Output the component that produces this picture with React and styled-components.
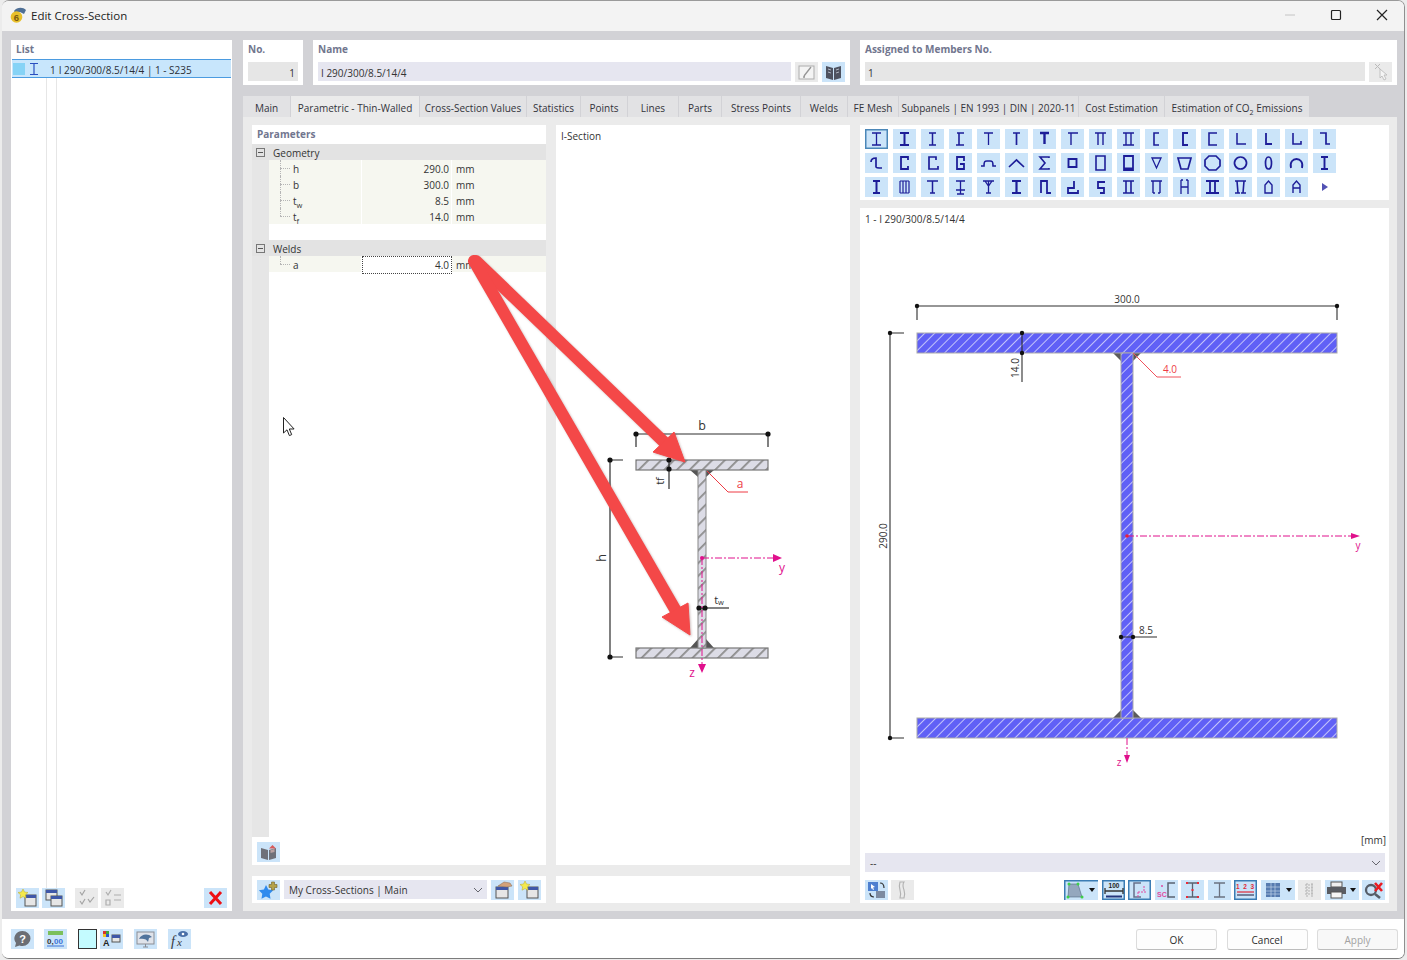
import React from "react";
import styled, { createGlobalStyle } from "styled-components";

const FONT = `"Open Sans", "Noto Sans", Arial, sans-serif`;
const NAVY = "#1d1d98";

const Global = createGlobalStyle`
  html, body {
    margin: 0;
    padding: 0;
    height: 960px;
    overflow: hidden;
    background: #ececec;
    font-family: ${FONT};
    font-size: 10px;
    color: #333;
  }
  * { box-sizing: border-box; }
`;

// cross-section picker glyphs, row by row
const SHAPES = [
  ["M7 4H16M11.5 4V16M7 16H16", 1.3, true],
  ["M7 4H16M7 16H16M11.5 4V16", 2],
  ["M8 4H15M11.5 4V16M8 16H15", 1.5],
  ["M8 4H15M10 4V16M7 16H15", 1.6],
  ["M7 4H16M11.5 4V16", 1.3],
  ["M8 4H15M11.5 4V16", 1.7],
  ["M7 4H16M11.5 4V15", 2.4],
  ["M7 4H17M10 4V16", 1.4],
  ["M6 4H17M9 4V16M14 4V16", 1.4],
  ["M6 4H17M9 4V16M14 4V16M6 16H17", 1.4],
  ["M14 4H9V16H14", 1.6],
  ["M15 4H10V16H15", 1.9],
  ["M16 4H8V16H16", 1.6],
  ["M8 4V15H17", 1.5],
  ["M9 4V15H15", 1.8],
  ["M8 4V15H16V12", 1.6],
  ["M7 4H13V15H17", 1.7],

  ["M6 9C6 5 10 5 11 5V14C11 15 14 15 17 15", 1.7],
  ["M15 7V4H8V16H15V13", 1.8],
  ["M15 7V4H8V16H17V13", 1.7],
  ["M15 8V4H8V16H15V11H11", 1.8],
  ["M4 13H7C7 8 8 8 10 8H13C15 8 16 8 16 13H19", 1.6],
  ["M4 14L11.5 7L19 14", 1.7],
  ["M16 5V4H7L12 10L7 16H16V15", 1.6],
  ["M7.5 6H15.5V14H7.5Z", 1.9],
  ["M7 3H16V17H7Z", 1.6],
  ["M7 3H16V17H7ZM7 15.5H16", 1.8],
  ["M7 5H16L11.5 15Z", 1.3],
  ["M5 5H18L15 16H8Z", 1.7],
  ["M8 3H15L19 7V13L15 17H8L4 13V7Z", 1.7],
  ["M11.5 4a6 6 0 1 0 .01 0Z", 1.7],
  ["M11.5 4c-4 0-4 12 0 12s4-12 0-12Z", 1.7],
  ["M6 15C3 3 20 3 17 15", 1.8],
  ["M8 4H15M11.5 4V16M8 16H15", 1.9],

  ["M8 4H15M11.5 4V16M8 16H15", 2],
  ["M7 4H16M7 16H16M7 4V16M16 4V16M10 4V16M13 4V16", 1.2],
  ["M6 4H17M11.5 4V16M9 16H14", 1.5],
  ["M7 4H16M11.5 4V17M7 13H16M8 17H15", 1.3],
  ["M6 4H17M8 4L11.5 9L15 4M11.5 4V16M9 16H14", 1.3],
  ["M7 4H16M11.5 4V16M7 16H16", 2.2],
  ["M8 16V4H14V16H18", 1.8],
  ["M13 4V11H7V16H17V13", 1.8],
  ["M16 5H9V11H15V16H11", 1.8],
  ["M6 4H17M9 4V16M14 4V16M6 16H17", 1.6],
  ["M6 4H17M8 4V16M15 4V16M8 16H10M13 16H15", 1.4],
  ["M8 3V17M15 3V17M8 10H15M8 3H10M13 3H15", 1.3],
  ["M5 4H18M9 4V16M14 4V16M5 16H18", 1.8],
  ["M6 4H17M8 4L9 16M15 4L14 16M6 16H11M12 16H17", 1.6],
  ["M8 16V8L11.5 4L15 8V16Z", 1.4],
  ["M8 16V8L11.5 4L15 8V16M8 11H15", 1.4],
];

const TABS = [
  ["Main", 48],
  ["Parametric - Thin-Walled", 129, true],
  ["Cross-Section Values", 107],
  ["Statistics", 54],
  ["Points", 47],
  ["Lines", 51],
  ["Parts", 43],
  ["Stress Points", 79],
  ["Welds", 47],
  ["FE Mesh", 51],
  ["Subpanels | EN 1993 | DIN | 2020-11", 180],
  ["Cost Estimation", 86],
  [
    <>
      Estimation of CO<sub>2</sub> Emissions
    </>,
    145,
  ],
];

const GEOMETRY = [
  ["h", "290.0"],
  ["b", "300.0"],
  [
    <>
      t<sub>w</sub>
    </>,
    "8.5",
  ],
  [
    <>
      t<sub>f</sub>
    </>,
    "14.0",
  ],
];

// small toolbar drawings
const Win = ({ x = 8, y = 6, w = 11, h = 11 }) => (
  <>
    <rect x={x} y={y} width={w} height={h} fill="#e6e6e6" stroke="#555" />
    <rect x={x} y={y} width={w} height="3" fill="#3f57a8" />
  </>
);
const Spark = () => <path d="M7 1l1.500 3 3.500.5-2.500 2.300.6 3.400L7 8.600l-3 1.600.6-3.400L2 4.500 5.500 4z" fill="#f4e94c" stroke="#b9a92a" strokeWidth=".5" />;

const ICONS = {
  add: (
    <>
      <Win x={9} y={7} w={11} h={11} />
      <Spark />
    </>
  ),
  copy: (
    <>
      <Win x={4} y={2} w={11} h={10} />
      <Win x={9} y={8} w={11} h={10} />
    </>
  ),
  checks: <path d="M5 4l2 3 3-5M5 13l2 3 3-5M13 11l2 3 4-5" fill="none" stroke="#9a9a9a" strokeWidth="1.200" />,
  checks2: <path d="M5 4l2 3 3-5M5 12h4v5H5zM13 7h7M13 12h7" fill="none" stroke="#a5a5a5" strokeWidth="1.200" />,
  del: <path d="M6 4l11 12M17 4L6 16" stroke="#ee0f14" strokeWidth="3" />,
  book: (
    <>
      <path d="M4 6l7 2v10l-7-2zM19 6l-7 2v10l7-2z" fill="#6f7078" />
      <path d="M15.500 3l3.500 3.500h-7z" fill="#d85a5a" />
      <path d="M13.500 8l4-1v3l-4 1z" fill="#b9a0a0" />
    </>
  ),
  star: (
    <>
      <path d="M9 5l2.300 4.500 5 .8-3.600 3.500.8 5-4.500-2.300-4.500 2.300.8-5L1.900 10.300l5-.8z" fill="#2f8bee" />
      <path d="M14.500 2h3v2.500h2.500v3h-2.500v2.500h-3V7.500H12v-3h2.500z" fill="#b4a24a" stroke="#70632a" strokeWidth=".6" />
    </>
  ),
  open: (
    <>
      <Win x={5} y={7} w={12} h={11} />
      <path d="M7 6l6-4 6 1 2 3-5 1z" fill="#d3a27a" stroke="#8b6b52" strokeWidth=".5" />
    </>
  ),
  edit: (
    <>
      <rect x="4" y="4" width="15" height="13" fill="#f3f3f3" stroke="#a5a5a5" />
      <path d="M9 14l7-9M8 15h2" stroke="#8a8a8a" strokeWidth="1.300" />
    </>
  ),
  lib: (
    <>
      <path d="M4 4l7 2v12l-7-2zM19 4l-7 2v12l7-2z" fill="#4e5260" />
      <path d="M6 7l3 1M6 10l3 1M14 8l3-1M14 11l3-1" stroke="#c9cfda" strokeWidth=".8" />
    </>
  ),
  pick: (
    <>
      <path d="M6 2l5 5M11 2L6 7" stroke="#b3b3b3" strokeWidth="1" />
      <path d="M11 7l7 6h-3l2 4-2 1-2-4-2 2z" fill="#f4f4f4" stroke="#b0b0b0" strokeWidth=".8" />
    </>
  ),
  help: (
    <>
      <path d="M11.500 2a8 7.500 0 0 1 0 15c-1 0-2 0-3-.5L4 18l1-4a8 7.500 0 0 1 6.500-12z" fill="#6b6e75" />
      <text x="11.500" y="14" textAnchor="middle" fontSize="11" fontWeight="700" fill="#fff" fontFamily="Liberation Sans">?</text>
    </>
  ),
  units: (
    <>
      <rect x="4" y="2" width="15" height="4" fill="#7cc05a" />
      <text x="3" y="15" fontSize="8" fontWeight="700" fill="#333" fontFamily="Liberation Sans">0,</text>
      <text x="10" y="15" fontSize="8" fontWeight="700" fill="#3a72d8" fontFamily="Liberation Sans">00</text>
      <path d="M3 17h17" stroke="#3a72d8" />
    </>
  ),
  colors: (
    <>
      <path d="M3 2h3v3H3z" fill="#d8322e" />
      <path d="M6 2h3v3H6z" fill="#3ca83a" />
      <path d="M3 5h3v3H3z" fill="#f2c420" />
      <path d="M6 5h3v3H6z" fill="#2a56d0" />
      <text x="3" y="17" fontSize="9" fontWeight="700" fill="#222" fontFamily="Liberation Sans">A</text>
      <Win x={12} y={6} w={8} h={7} />
    </>
  ),
  screen: (
    <>
      <rect x="3" y="3" width="17" height="12" fill="#dfe3ea" stroke="#8a8d95" />
      <path d="M5 10c2-5 9-6 13-2l-3 1-1 4c-1-3-5-4-9-3z" fill="#51749c" />
      <path d="M9 18h5M11.500 15v3" stroke="#8a8d95" />
    </>
  ),
  fx: (
    <>
      <text x="3" y="17" fontSize="14" fontStyle="italic" fill="#33353a" fontFamily="Liberation Serif">f</text>
      <text x="9" y="17" fontSize="11" fontStyle="italic" fill="#33353a" fontFamily="Liberation Serif">x</text>
      <ellipse cx="15" cy="5" rx="5" ry="3" fill="#4a70a8" />
      <circle cx="15" cy="5" r="1.300" fill="#fff" />
    </>
  ),
  swap: (
    <>
      <rect x="3" y="2" width="10" height="9" fill="#4d7fd0" />
      <path d="M6 4l4 3-2 .5 1 2-1 .5-1-2-1 1z" fill="#fff" />
      <rect x="11" y="11" width="9" height="7" fill="#7d8aa0" />
      <path d="M15 3c3 0 4 2 4 5M9 17c-3 0-4-2-4-4" fill="none" stroke="#333" strokeWidth="1.200" />
    </>
  ),
  bracket: <path d="M9 2h4c-2 3-1 5 0 8s1 5 0 8H9c1-3 1-5 0-8s-1-5 0-8z" fill="none" stroke="#a9a9a9" strokeWidth="1.100" />,
  taper: (
    <>
      <path d="M5 4h9l4 13H4z" fill="#94a7be" stroke="#4f657f" strokeWidth=".6" />
      <path d="M5 4h.01M14 4h.01M4 17h.01M18 17h.01" stroke="#3ed04a" strokeWidth="3" strokeLinecap="round" />
    </>
  ),
  scale: (
    <>
      <path d="M3 11h18M3 8v6M21 8v6" stroke="#333" strokeWidth="1.300" />
      <path d="M4 16.500h16" stroke="#23357a" strokeWidth="2" />
      <text x="12" y="8" textAnchor="middle" fontSize="6.500" fontWeight="700" fill="#222" fontFamily="Liberation Sans">100</text>
    </>
  ),
  axes: (
    <>
      <path d="M13 3H6v14h7" fill="none" stroke="#67708a" strokeWidth="1.500" />
      <path d="M10 12h8M10 12v6M16 6v6" stroke="#e04aa0" strokeWidth="1" strokeDasharray="2 1" />
    </>
  ),
  shear: (
    <>
      <path d="M20 3h-7v14h7" fill="none" stroke="#5a6270" strokeWidth="1.500" />
      <circle cx="7" cy="6" r="1" fill="#e04aa0" />
      <text x="2" y="17" fontSize="7" fontWeight="700" fill="#e04aa0" fontFamily="Liberation Sans">SC</text>
    </>
  ),
  redI: (
    <>
      <path d="M6 3h11M11.500 3v14M6 17h11" stroke="#5a6270" strokeWidth="1.300" />
      <path d="M5 3h2M16 3h2M5 17h2M16 17h2M10.500 10h2" stroke="#ea2c3a" strokeWidth="2" />
    </>
  ),
  grayI: <path d="M6 3h11M11.500 3v14M6 17h11" stroke="#6b7280" strokeWidth="1.300" fill="none" />,
  nums: (
    <>
      <text x="11.500" y="9" textAnchor="middle" fontSize="6.500" fontWeight="700" fill="#e02a38" fontFamily="Liberation Sans" letterSpacing=".9">1 2 3</text>
      <path d="M3 12h17" stroke="#e02a38" strokeWidth="1.200" />
      <path d="M3 15h17" stroke="#3a3f5c" strokeWidth="1.200" />
    </>
  ),
  table: (
    <>
      <rect x="5" y="3" width="14" height="14" fill="#567bb0" />
      <path d="M5 7h14M5 11h14M5 14h14M10 3v14M14 3v14" stroke="#bfd2ea" strokeWidth=".7" />
    </>
  ),
  ruler: <path d="M9 3v14M14 3v14M7 5h9M7 8h9M7 11h9M7 14h9" stroke="#a9a9a9" strokeWidth="1" strokeDasharray="2 1" />,
  print: (
    <>
      <rect x="6" y="2" width="11" height="5" fill="#f0f0f0" stroke="#555" />
      <rect x="2" y="7" width="19" height="7" fill="#5a5d63" />
      <rect x="6" y="12" width="11" height="6" fill="#f5f5f5" stroke="#555" />
    </>
  ),
  zoomX: (
    <>
      <circle cx="9" cy="10" r="5" fill="none" stroke="#555d68" strokeWidth="2.300" />
      <path d="M13 14l5 4" stroke="#555d68" strokeWidth="2.600" />
      <path d="M13 3l7 8M20 3l-7 8" stroke="#ea1c22" strokeWidth="2.600" />
    </>
  ),
};

const BOTTOM_TOOLS = [
  ["taper", "menu", true],
  ["scale", "", true],
  ["axes", "", true],
  ["shear"],
  ["redI"],
  ["grayI"],
  ["nums", "", true],
  ["table", "menu"],
  ["ruler", "off"],
  ["print", "menu"],
  ["zoomX"],
];

export default function App() {
  return (
    <Window>
      <Global />
      <TitleBar>
        <AppLogo viewBox="0 0 16 16">
          <path d="M4 4C7 0 13 0 16 3L14 7L10 5L5 6Z" fill="#4f6f95" />
          <circle cx="6.500" cy="10" r="5.800" fill="#e8c02c" />
          <text x="6.500" y="13.500" textAnchor="middle" fontSize="9.500" fontWeight="700" fill="#7a5a10" fontFamily="Liberation Sans">6</text>
        </AppLogo>
        <Title>Edit Cross-Section</Title>
        <WinControls>
          <WinIcon viewBox="0 0 12 12"><path d="M1 6h10" stroke="#c4c4c4" /></WinIcon>
          <WinIcon viewBox="0 0 12 12"><rect x="1.500" y="1.500" width="9" height="9" rx="1" fill="none" stroke="#222" strokeWidth="1.200" /></WinIcon>
          <WinIcon viewBox="0 0 12 12"><path d="M1 1l10 10M11 1L1 11" stroke="#222" strokeWidth="1.200" /></WinIcon>
        </WinControls>
      </TitleBar>

      <Main>
        <ListPanel>
          <Caption>List</Caption>
          <ListRow>
            <Swatch />
            <RowGlyph viewBox="0 0 12 14"><path d="M2 1.500h8M6 1.500v11M2 12.500h8" stroke="#2a4fc0" strokeWidth="1.200" fill="none" /></RowGlyph>
            <RowNo>1</RowNo>
            <RowText>I 290/300/8.5/14/4 | 1 - S235</RowText>
          </ListRow>
          <ListBody />
          <ListTools>
            <Tool><Ico name="add" /></Tool>
            <Tool><Ico name="copy" /></Tool>
            <Tool $off $ml={7}><Ico name="checks" /></Tool>
            <Tool $off><Ico name="checks2" /></Tool>
            <Tool $ml={77}><Ico name="del" /></Tool>
          </ListTools>
        </ListPanel>

        <Content>
          <HeadRow>
            <HeadBox $w="60px">
              <Caption>No.</Caption>
              <Field $gray $right>1</Field>
            </HeadBox>
            <HeadBox $w="537px">
              <Caption>Name</Caption>
              <FieldRow>
                <Field>I 290/300/8.5/14/4</Field>
                <Tool $off><Ico name="edit" /></Tool>
                <Tool><Ico name="lib" /></Tool>
              </FieldRow>
            </HeadBox>
            <HeadBox $w="537px">
              <Caption>Assigned to Members No.</Caption>
              <FieldRow>
                <Field $gray>1</Field>
                <Tool $off><Ico name="pick" /></Tool>
              </FieldRow>
            </HeadBox>
          </HeadRow>

          <Tabs>
            {TABS.map(([label, w, active], i) => (
              <Tab key={i} $w={w} $active={active}>{label}</Tab>
            ))}
          </Tabs>

          <TabPage>
            <ParamPanel>
              <Caption>Parameters</Caption>
              <TreeWrap>
                <GroupRow><Toggle /><GroupText>Geometry</GroupText></GroupRow>
                {GEOMETRY.map(([name, value], i) => (
                  <ParamRow key={i}>
                    <ParamName $last={i === GEOMETRY.length - 1}>{name}</ParamName>
                    <ParamValue>{value}</ParamValue>
                    <ParamUnit>mm</ParamUnit>
                  </ParamRow>
                ))}
                <Spacer />
                <GroupRow><Toggle /><GroupText>Welds</GroupText></GroupRow>
                <ParamRow>
                  <ParamName $last>a</ParamName>
                  <ParamValue $focus>4.0</ParamValue>
                  <ParamUnit>mm</ParamUnit>
                </ParamRow>
              </TreeWrap>
              <ParamFoot>
                <Tool><Ico name="book" /></Tool>
              </ParamFoot>
            </ParamPanel>

            <SketchPanel>
              <SectionName>I-Section</SectionName>
              <SchemeSketch />
            </SketchPanel>

            <RightCol>
              <ShapePicker>
                {SHAPES.map(([d, w, sel], i) => (
                  <ShapeBtn key={i} $selected={sel}>
                    <svg width="23" height="20" viewBox="0 0 23 20">
                      <path d={d} fill="none" stroke={NAVY} strokeWidth={w} />
                    </svg>
                  </ShapeBtn>
                ))}
                <MoreArrow viewBox="0 0 8 10"><path d="M1 1l6 4-6 4z" fill="#5252b4" /></MoreArrow>
              </ShapePicker>
              <DrawingPanel>
                <DrawingName>1 - I 290/300/8.5/14/4</DrawingName>
                <ResultSketch />
                <UnitLabel>[mm]</UnitLabel>
                <Combo $wide>--<Chevron /></Combo>
                <DrawTools>
                  <Tool><Ico name="swap" /></Tool>
                  <Tool $off><Ico name="bracket" /></Tool>
                  <DrawToolsEnd>
                    {BOTTOM_TOOLS.map(([name, kind, sel]) =>
                      kind === "menu" ? (
                        <MenuTool key={name} $selected={sel}>
                          <Ico name={name} />
                          <MenuCaret />
                        </MenuTool>
                      ) : (
                        <Tool key={name} $off={kind === "off"} $selected={sel}>
                          <Ico name={name} />
                        </Tool>
                      )
                    )}
                  </DrawToolsEnd>
                </DrawTools>
              </DrawingPanel>
            </RightCol>

            <ComboBar>
              <Tool><Ico name="star" /></Tool>
              <Combo>My Cross-Sections | Main<Chevron /></Combo>
              <Tool><Ico name="open" /></Tool>
              <Tool><Ico name="add" /></Tool>
            </ComboBar>
            <EmptyBar />
          </TabPage>
        </Content>
      </Main>

      <Footer>
        <FootTools>
          <Tool><Ico name="help" /></Tool>
          <Tool $ml={10}><Ico name="units" /></Tool>
          <ColorBox />
          <Tool $ml={3}><Ico name="colors" /></Tool>
          <Tool $ml={11}><Ico name="screen" /></Tool>
          <Tool $ml={11}><Ico name="fx" /></Tool>
        </FootTools>
        <FootButtons>
          <DlgButton>OK</DlgButton>
          <DlgButton>Cancel</DlgButton>
          <DlgButton $off>Apply</DlgButton>
        </FootButtons>
      </Footer>

      <Overlay viewBox="0 0 1407 960">
        <g fill="#f44848" stroke="#f44848" style={{ filter: "drop-shadow(1px 1px 1px rgba(90,40,40,.3))" }}>
          <path d="M476 261L664 442" strokeWidth="12" strokeLinecap="round" />
          <path d="M685 462L653 452L674 432Z" strokeWidth="1" />
          <path d="M474 261L676 611" strokeWidth="12" strokeLinecap="round" />
          <path d="M690 635L662 617L688 603Z" strokeWidth="1" />
        </g>
        <path d="M283.500 417.500V433l3.500-3.200 2.400 5.800 2.300-1-2.400-5.600h4.800z" fill="#fff" stroke="#222" strokeWidth="1" />
      </Overlay>
    </Window>
  );
}

function Ico({ name }) {
  return (
    <svg width="23" height="20" viewBox="0 0 23 20">
      {ICONS[name]}
    </svg>
  );
}

function Chevron() {
  return (
    <ChevronSvg viewBox="0 0 10 6">
      <path d="M1 1l4 4 4-4" fill="none" stroke="#66666e" strokeWidth="1" />
    </ChevronSvg>
  );
}

function Dot({ x, y, r = 2.600, fill = "#111" }) {
  return <circle cx={x} cy={y} r={r} fill={fill} />;
}

function SchemeSketch() {
  const dark = "#2e2e2e";
  const pink = "#e0108c";
  return (
    <SketchSvg viewBox="556 125 294 740">
      <defs>
        <pattern id="hatchA" width="9" height="9" patternUnits="userSpaceOnUse" patternTransform="rotate(45)">
          <rect width="9" height="9" fill="#dcdce6" />
          <rect width="1.800" height="9" fill="#8d8d8d" />
        </pattern>
      </defs>
      <path d="M690 470h24l-8 7v4h-8v-4z" fill="#555" />
      <path d="M690 648h24l-8-9v-4h-8v4z" fill="#555" />
      <rect x="636" y="460" width="132" height="10" fill="url(#hatchA)" stroke="#777" strokeWidth="1.200" />
      <rect x="636" y="648" width="132" height="10" fill="url(#hatchA)" stroke="#777" strokeWidth="1.200" />
      <rect x="698" y="470" width="8" height="178" fill="url(#hatchA)" stroke="#888" strokeWidth="1" />

      <g stroke={dark} strokeWidth="1.200" fill="none">
        <path d="M636 434H768M636 434V447M768 434V447" />
        <path d="M610 460V657M610 460H623M610 657H623" />
        <path d="M669 460V489" />
        <path d="M698 608H729" />
      </g>
      <Dot x={636} y={434} /><Dot x={768} y={434} />
      <Dot x={610} y={460} /><Dot x={610} y={657} />
      <Dot x={669} y={460} /><Dot x={669} y={469} />
      <Dot x={699} y={608} /><Dot x={705} y={608} />
      <path d="M707 471L728 492H748" fill="none" stroke="#ee3b44" strokeWidth="1" />
      <path d="M702 558H778M702 558V668" fill="none" stroke={pink} strokeWidth="1" strokeDasharray="7 2 2 2" />
      <path d="M782 558l-9-4v8zM702 673l-4-9h8z" fill={pink} />
      <Dot x={702} y={558} r={2} fill={pink} />
      <g fontFamily={FONT}>
        <SketchText x={702} y={430} fontSize="12.500">b</SketchText>
        <SketchText x={606} y={558} fontSize="12.500" transform="rotate(-90 606 558)">h</SketchText>
        <SketchText x={664} y={481} fontSize="11" transform="rotate(-90 664 481)">tf</SketchText>
        <SketchText x={719} y={604} fontSize="11">t<tspan fontSize="7.500" dy="1">w</tspan></SketchText>
        <SketchText x={740} y={488} fontSize="12" fill="#ee3b44">a</SketchText>
        <SketchText x={782} y={572} fontSize="12" fill={pink}>y</SketchText>
        <SketchText x={692} y={677} fontSize="12" fill={pink}>z</SketchText>
      </g>
    </SketchSvg>
  );
}

function ResultSketch() {
  const dark = "#2e2e2e";
  const pink = "#e0108c";
  return (
    <ResultSvg viewBox="860 226 529 606">
      <defs>
        <pattern id="hatchB" width="7" height="7" patternUnits="userSpaceOnUse" patternTransform="rotate(45)">
          <rect width="7" height="7" fill="#6060f6" />
          <rect width="1" height="7" fill="#c3c3fa" />
        </pattern>
      </defs>
      <path d="M1113 353h28l-8 8h-12zM1113 718h28l-8-8h-12z" fill="#5b5b5b" />
      <rect x="917" y="333" width="420" height="20" fill="url(#hatchB)" stroke="#a9a9a9" />
      <rect x="917" y="718" width="420" height="20" fill="url(#hatchB)" stroke="#a9a9a9" />
      <rect x="1121" y="353" width="12" height="365" fill="url(#hatchB)" stroke="#a9a9a9" />
      <g stroke={dark} strokeWidth="1.100" fill="none">
        <path d="M917 306H1337M917 306V320M1337 306V320" />
        <path d="M890 333V738M890 333H904M890 738H904" />
        <path d="M1022 333V382" />
        <path d="M1121 637H1157" />
      </g>
      <Dot x={917} y={306} r={2.200} /><Dot x={1337} y={306} r={2.200} />
      <Dot x={890} y={333} r={2.200} /><Dot x={890} y={738} r={2.200} />
      <Dot x={1022} y={333} r={2.200} /><Dot x={1022} y={353} r={2.200} />
      <Dot x={1121} y={637} r={2.200} /><Dot x={1133} y={637} r={2.200} />
      <path d="M1133 353L1157 377H1181" fill="none" stroke="#f0525c" strokeWidth="1" />
      <path d="M1127 536H1355M1127 738V757" fill="none" stroke={pink} strokeWidth="1" strokeDasharray="7 2 2 2" />
      <path d="M1360 536l-9-3v6zM1127 763l-3-8h6z" fill={pink} />
      <Dot x={1127} y={536} r={1.800} fill="#e8203a" />
      <g fontFamily={FONT} fontSize="10">
        <SketchText x={1127} y={303}>300.0</SketchText>
        <SketchText x={887} y={536} transform="rotate(-90 887 536)">290.0</SketchText>
        <SketchText x={1019} y={368} transform="rotate(-90 1019 368)">14.0</SketchText>
        <SketchText x={1146} y={634}>8.5</SketchText>
        <SketchText x={1170} y={373} fill="#ee3b44">4.0</SketchText>
        <SketchText x={1358} y={549} fill={pink}>y</SketchText>
        <SketchText x={1119} y={766} fill={pink}>z</SketchText>
      </g>
    </ResultSvg>
  );
}

const Window = styled.div`
  position: relative;
  width: 1403px;
  height: 959px;
  margin-left: 2px;
  display: grid;
  grid-template-rows: 30px 888px 39px;
  background: #fff;
  border-top: 1px solid #9a9a9a;
  border-right: 1px solid #8f8f8f;
  border-bottom: 1px solid #7c7c7c;
  border-radius: 7px;
  overflow: hidden;
`;
const TitleBar = styled.div`
  display: flex;
  align-items: center;
  background: #f3f3f3;
  padding: 0 0 2px 8px;
`;
const AppLogo = styled.svg`
  width: 16px;
  height: 16px;
`;
const Title = styled.div`
  margin-left: 5px;
  font-size: 11.500px;
  color: #222;
`;
const WinControls = styled.div`
  margin-left: auto;
  display: flex;
  gap: 34px;
  padding-right: 17px;
`;
const WinIcon = styled.svg`
  width: 12px;
  height: 12px;
`;
const Main = styled.div`
  display: flex;
  gap: 11px;
  padding: 9px 8px 8px 9px;
  background: #d2d2d6;
`;
const Caption = styled.div`
  height: 22px;
  padding: 2px 5px 0;
  font-weight: 700;
  font-size: 10px;
  color: #71768e;
`;
const ListPanel = styled.div`
  width: 221px;
  display: flex;
  flex-direction: column;
  background: #fff;
  padding: 0 1px;
  & > ${Caption} {
    height: 19px;
    padding-left: 4px;
  }
`;
const ListRow = styled.div`
  height: 19px;
  display: flex;
  align-items: center;
  background: #c8e6fc;
  border-top: 1px solid #4b9be0;
  border-bottom: 1px solid #4b9be0;
  font-size: 10px;
  color: #2c3038;
`;
const Swatch = styled.i`
  width: 12px;
  height: 12px;
  margin-left: 1px;
  background: #86d3f6;
`;
const RowGlyph = styled.svg`
  width: 12px;
  height: 14px;
  margin-left: 3px;
`;
const RowNo = styled.span`
  margin: 2px 3px 0 10px;
`;
const RowText = styled.span`
  margin-top: 2px;
`;
const ListBody = styled.div`
  flex: 1;
  margin-left: 34px;
  width: 11px;
  border-left: 1px solid #e6e6e6;
  border-right: 1px solid #e6e6e6;
`;
const ListTools = styled.div`
  height: 23px;
  display: flex;
  gap: 3px;
  padding-left: 4px;
`;
const Tool = styled.div`
  flex: none;
  width: 23px;
  height: 20px;
  margin-left: ${({ $ml }) => $ml || 0}px;
  background: ${({ $off }) => ($off ? "#e8e8e8" : "#cbe4f9")};
  box-shadow: ${({ $selected }) => ($selected ? "inset 0 0 0 1.500px #3b7cb4" : "none")};
  opacity: ${({ $off }) => ($off ? 0.9 : 1)};
  svg { display: block; }
`;
const MenuTool = styled.div`
  flex: none;
  width: 34px;
  height: 20px;
  display: flex;
  align-items: center;
  background: #cbe4f9;
  box-shadow: ${({ $selected }) => ($selected ? "inset 1.500px 0 0 #3b7cb4, inset 0 1.500px 0 #3b7cb4" : "none")};
  svg { display: block; flex: none; }
`;
const MenuCaret = styled.i`
  width: 0;
  height: 0;
  margin-left: 2px;
  border-left: 3.500px solid transparent;
  border-right: 3.500px solid transparent;
  border-top: 4px solid #111;
`;
const Content = styled.div`
  width: 1154px;
  display: flex;
  flex-direction: column;
`;
const HeadRow = styled.div`
  display: flex;
  gap: 10px;
  height: 45px;
  margin-bottom: 11px;
`;
const HeadBox = styled.div`
  width: ${({ $w }) => $w};
  background: #fff;
  padding: 0 5px;
  & > ${Caption} {
    padding-left: 0;
  }
`;
const FieldRow = styled.div`
  display: flex;
  gap: 4px;
`;
const Field = styled.div`
  flex: 1;
  height: 19px;
  line-height: 20px;
  padding: 1px 3px 0 3px;
  text-align: ${({ $right }) => ($right ? "right" : "left")};
  background: ${({ $gray }) => ($gray ? "#e6e6e6" : "#e6e6f0")};
  color: #333;
  font-size: 10px;
`;
const Tabs = styled.div`
  display: flex;
  height: 21px;
`;
const Tab = styled.div`
  flex: none;
  width: ${({ $w }) => $w}px;
  line-height: 24px;
  text-align: center;
  white-space: nowrap;
  background: ${({ $active }) => ($active ? "#ebebeb" : "#e2e2e4")};
  color: #33333a;
  font-size: 10px;
  border-right: 1px solid #d2d2d6;
  sub {
    font-size: 7px;
    line-height: 0;
  }
`;
const TabPage = styled.div`
  height: 794px;
  display: grid;
  grid-template-columns: 294px 294px 529px;
  grid-template-rows: 740px 27px;
  column-gap: 10px;
  row-gap: 11px;
  padding: 8px 8px 8px 9px;
  background: #ebebeb;
`;
const ParamPanel = styled.div`
  display: flex;
  flex-direction: column;
  background: #fff;
  & > ${Caption} {
    height: 19px;
    padding-left: 5px;
  }
`;
const TreeWrap = styled.div`
  flex: 1;
  background: linear-gradient(#e6e6e6, #e6e6e6) left top / 17px 100% no-repeat;
`;
const GroupRow = styled.div`
  height: 16px;
  display: flex;
  align-items: center;
  gap: 8px;
  padding-left: 4px;
  background: #e3e3e3;
  color: #333;
  font-size: 10px;
`;
const GroupText = styled.span`
  margin-top: 2px;
`;
const Toggle = styled.i`
  position: relative;
  width: 9px;
  height: 9px;
  border: 1px solid #777;
  background: linear-gradient(#555, #555) center / 5px 1px no-repeat;
`;
const ParamRow = styled.div`
  height: 16px;
  display: grid;
  grid-template-columns: 93px 90px 1fr;
  margin-left: 17px;
  background: #f6f7f0;
  font-size: 10px;
  line-height: 18px;
  color: #333;
  sub {
    font-size: 7.500px;
    line-height: 0;
  }
`;
const ParamName = styled.div`
  position: relative;
  padding-left: 24px;
  border-right: 1px solid #fff;
  &::before {
    content: "";
    position: absolute;
    left: 11px;
    top: 0;
    height: ${({ $last }) => ($last ? "8px" : "16px")};
    border-left: 1px dotted #b5b5b5;
  }
  &::after {
    content: "";
    position: absolute;
    left: 11px;
    top: 8px;
    width: 10px;
    border-top: 1px dotted #b5b5b5;
  }
`;
const ParamValue = styled.div`
  text-align: right;
  padding-right: 2px;
  border-right: 1px solid #fff;
  background: ${({ $focus }) => ($focus ? "#fff" : "transparent")};
  outline: ${({ $focus }) => ($focus ? "1px dotted #444" : "none")};
  outline-offset: -1px;
`;
const ParamUnit = styled.div`
  padding-left: 4px;
`;
const Spacer = styled.div`
  height: 16px;
  margin-left: 17px;
  background: #fff;
`;
const ParamFoot = styled.div`
  height: 28px;
  padding: 5px 0 0 5px;
`;
const SketchPanel = styled.div`
  position: relative;
  background: #fff;
`;
const SectionName = styled.div`
  position: absolute;
  left: 5px;
  top: 4px;
  font-size: 10px;
`;
const SketchSvg = styled.svg`
  display: block;
  width: 294px;
  height: 740px;
`;
const SketchText = styled.text.attrs(({ fill }) => ({ fill: fill || "#333", textAnchor: "middle" }))``;
const RightCol = styled.div`
  grid-row: 1 / span 2;
  grid-column: 3;
  display: flex;
  flex-direction: column;
  gap: 8px;
`;
const ShapePicker = styled.div`
  flex: none;
  height: 75px;
  display: grid;
  grid-template-columns: repeat(17, 23px);
  grid-auto-rows: 20px;
  column-gap: 5px;
  row-gap: 4px;
  padding: 4px 5px 0;
  background: #fff;
`;
const ShapeBtn = styled.div`
  width: 23px;
  height: 20px;
  background: #cbe4f9;
  box-shadow: ${({ $selected }) => ($selected ? "inset 0 0 0 1.500px #4b87b8" : "none")};
  svg { display: block; }
`;
const MoreArrow = styled.svg`
  width: 8px;
  height: 10px;
  margin: 5px 0 0 8px;
`;
const DrawingPanel = styled.div`
  flex: 1;
  min-height: 0;
  background: #fff;
  padding: 0 5px;
`;
const DrawingName = styled.div`
  height: 18px;
  padding-top: 4px;
  font-size: 10px;
`;
const ResultSvg = styled.svg`
  display: block;
  width: 529px;
  height: 606px;
  margin-left: -5px;
`;
const UnitLabel = styled.div`
  height: 21px;
  padding-top: 1px;
  margin-right: -2px;
  text-align: right;
  font-size: 10px;
`;
const Combo = styled.div`
  flex: 1;
  position: relative;
  height: 19px;
  line-height: 20px;
  padding: 0 5px;
  margin-right: ${({ $wide }) => ($wide ? "-1px" : "0")};
  background: #e6e6f0;
  font-size: 10px;
  color: #333;
`;
const ChevronSvg = styled.svg`
  position: absolute;
  right: 4px;
  top: 7px;
  width: 10px;
  height: 6px;
`;
const DrawTools = styled.div`
  display: flex;
  gap: 3px;
  margin-top: 8px;
`;
const DrawToolsEnd = styled.div`
  margin: 0 -1px 0 auto;
  display: flex;
  gap: 3.500px;
`;
const ComboBar = styled.div`
  grid-column: 1;
  grid-row: 2;
  display: flex;
  align-items: center;
  gap: 4px;
  padding: 0 5px;
  background: #fff;
`;
const EmptyBar = styled.div`
  grid-column: 2;
  grid-row: 2;
  background: #fff;
`;
const Footer = styled.div`
  display: flex;
  align-items: flex-start;
  justify-content: space-between;
  background: #fff;
  padding: 10px 7px 0 9px;
`;
const FootTools = styled.div`
  display: flex;
`;
const ColorBox = styled.i`
  width: 19px;
  height: 20px;
  margin-left: 11px;
  background: #c4fbff;
  border: 1px solid #333;
`;
const FootButtons = styled.div`
  display: flex;
  gap: 9.500px;
`;
const DlgButton = styled.div`
  width: 81px;
  height: 21px;
  line-height: 21px;
  text-align: center;
  border: 1px solid #dcdcdc;
  border-bottom-color: #bdbdbd;
  border-radius: 3px;
  background: ${({ $off }) => ($off ? "#f8f8f8" : "#fdfdfd")};
  color: ${({ $off }) => ($off ? "#a2a2a2" : "#2c2c2c")};
  font-size: 10px;
`;
const Overlay = styled.svg`
  position: absolute;
  left: -2px;
  top: -1px;
  width: 1407px;
  height: 960px;
  pointer-events: none;
`;
